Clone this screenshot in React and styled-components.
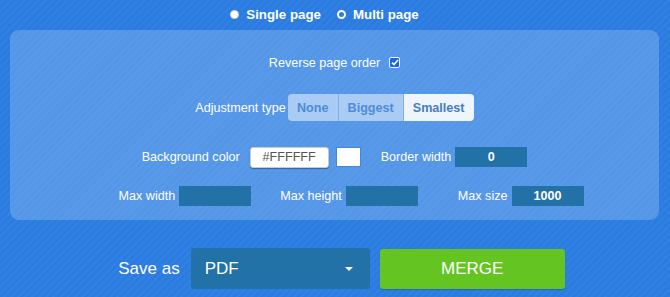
import styled, { createGlobalStyle } from "styled-components";

const GlobalStyle = createGlobalStyle`
  html, body {
    margin: 0;
    padding: 0;
  }
  body {
    width: 670px;
    height: 297px;
    overflow: hidden;
    font-family: "Liberation Sans", Arial, sans-serif;
    background-color: #2a7ce1;
    background-image: repeating-linear-gradient(
      -45deg,
      rgba(255, 255, 255, 0.035) 0 2px,
      transparent 2px 5px
    );
    color: #fff;
  }
`;

const App = () => {
  return (
    <>
      <GlobalStyle />
      <Page>
        <ModeRow>
          <ModeOption>
            <Radio filled />
            Single page
          </ModeOption>
          <ModeOption>
            <Radio />
            Multi page
          </ModeOption>
        </ModeRow>

        <Panel>
          <Row height={26}>
            <Label>Reverse page order</Label>
            <Check>
              <svg width="8" height="7" viewBox="0 0 8 7">
                <path d="M1 3.6 L3 5.6 L7 1" fill="none" stroke="#fff" strokeWidth="1.6" />
              </svg>
            </Check>
          </Row>

          <Row height={27} top={18}>
            <Label>Adjustment type</Label>
            <Segmented>
              <Segment width={50}>None</Segment>
              <Segment width={64}>Biggest</Segment>
              <Segment width={70} active>
                Smallest
              </Segment>
            </Segmented>
          </Row>

          <Row height={22} top={25}>
            <Label>Background color</Label>
            <ColorInput>#FFFFFF</ColorInput>
            <Swatch />
            <Label gap={20}>Border width</Label>
            <Field>0</Field>
          </Row>

          <Row height={20} top={18} shift={33}>
            <Label>Max width</Label>
            <Field />
            <Label gap={29}>Max height</Label>
            <Field />
            <Label gap={40}>Max size</Label>
            <Field>1000</Field>
          </Row>
        </Panel>

        <SaveRow>
          <SaveLabel>Save as</SaveLabel>
          <Select>
            <span>PDF</span>
            <Caret />
          </Select>
          <MergeButton>MERGE</MergeButton>
        </SaveRow>
      </Page>
    </>
  );
};

export default App;

const Page = styled.div`
  display: flex;
  flex-direction: column;
`;

const ModeRow = styled.div`
  height: 30px;
  display: flex;
  justify-content: center;
  align-items: center;
  gap: 16px;
  padding-right: 21px;
  padding-bottom: 1px;
  box-sizing: border-box;
`;

const ModeOption = styled.label`
  display: flex;
  align-items: center;
  gap: 7px;
  font-size: 13.3px;
  font-weight: bold;
`;

const Radio = styled.span`
  width: 9px;
  height: 9px;
  border-radius: 50%;
  box-sizing: border-box;
  background: ${(p) => (p.filled ? "#fff" : "transparent")};
  border: ${(p) => (p.filled ? "1px solid #d8d8d8" : "2px solid #fff")};
`;

const Panel = styled.div`
  margin: 0 11px 0 10px;
  height: 190px;
  box-sizing: border-box;
  padding-top: 20px;
  background: rgba(255, 255, 255, 0.2);
  border-radius: 9px;
  display: flex;
  flex-direction: column;
`;

const Row = styled.div`
  height: ${(p) => p.height}px;
  margin-top: ${(p) => p.top || 0}px;
  padding-left: ${(p) => p.shift || 0}px;
  display: flex;
  justify-content: center;
  align-items: center;
`;

const Label = styled.span`
  font-size: 12.6px;
  margin-left: ${(p) => p.gap || 0}px;
  margin-right: 4px;
  white-space: nowrap;
`;

const Check = styled.span`
  width: 11px;
  height: 11px;
  margin-left: 5px;
  margin-top: -1px;
  border-radius: 2px;
  background: #1669e6;
  border: 1px solid #fff;
  box-sizing: border-box;
  display: flex;
  align-items: center;
  justify-content: center;
`;

const Segmented = styled.div`
  display: flex;
  height: 27px;
  margin-left: -2px;
  border-radius: 4px;
  overflow: hidden;
`;

const Segment = styled.div`
  width: ${(p) => p.width}px;
  display: flex;
  align-items: center;
  justify-content: center;
  font-size: 12.6px;
  font-weight: bold;
  background: ${(p) => (p.active ? "#eef5fd" : "#a9cbf4")};
  color: ${(p) => (p.active ? "#4a7cbf" : "#4d8cd8")};
  border-left: 1px solid #7fb0ec;

  &:first-child {
    border-left: none;
  }
`;

const ColorInput = styled.div`
  width: 79px;
  height: 21px;
  margin-left: 6px;
  box-sizing: border-box;
  background: #fff;
  border: 1px solid #c9c9c9;
  border-radius: 3px;
  box-shadow: 0 1px 1px rgba(0, 0, 0, 0.35);
  color: #555;
  font-size: 12.6px;
  display: flex;
  align-items: center;
  justify-content: center;
`;

const Swatch = styled.div`
  width: 25px;
  height: 20px;
  margin-left: 7px;
  margin-top: -1px;
  box-sizing: border-box;
  background: #fff;
  border: 1px solid #3d8ad8;
`;

const Field = styled.div`
  width: 72px;
  height: 20px;
  background: #2272a8;
  color: #fff;
  font-size: 12.6px;
  font-weight: bold;
  display: flex;
  align-items: center;
  justify-content: center;
`;

const SaveRow = styled.div`
  margin-top: 28px;
  display: flex;
  justify-content: center;
  align-items: center;
  padding-left: 13px;
`;

const SaveLabel = styled.span`
  font-size: 17px;
  margin-right: 11px;
`;

const Select = styled.div`
  width: 179px;
  height: 41px;
  box-sizing: border-box;
  padding: 0 14px;
  background: #2272a8;
  border-radius: 3px;
  display: flex;
  align-items: center;
  justify-content: space-between;
  font-size: 17px;
`;

const Caret = styled.span`
  width: 0;
  height: 0;
  margin-right: 3px;
  border-left: 4px solid transparent;
  border-right: 4px solid transparent;
  border-top: 4px solid #fff;
`;

const MergeButton = styled.button`
  width: 185px;
  height: 40px;
  margin-left: 10px;
  border: none;
  border-radius: 3px;
  background: #64c522;
  color: #fff;
  font-family: "Liberation Sans", Arial, sans-serif;
  font-size: 17px;
  box-shadow: 0 1px 1px rgba(0, 0, 0, 0.2);
`;
